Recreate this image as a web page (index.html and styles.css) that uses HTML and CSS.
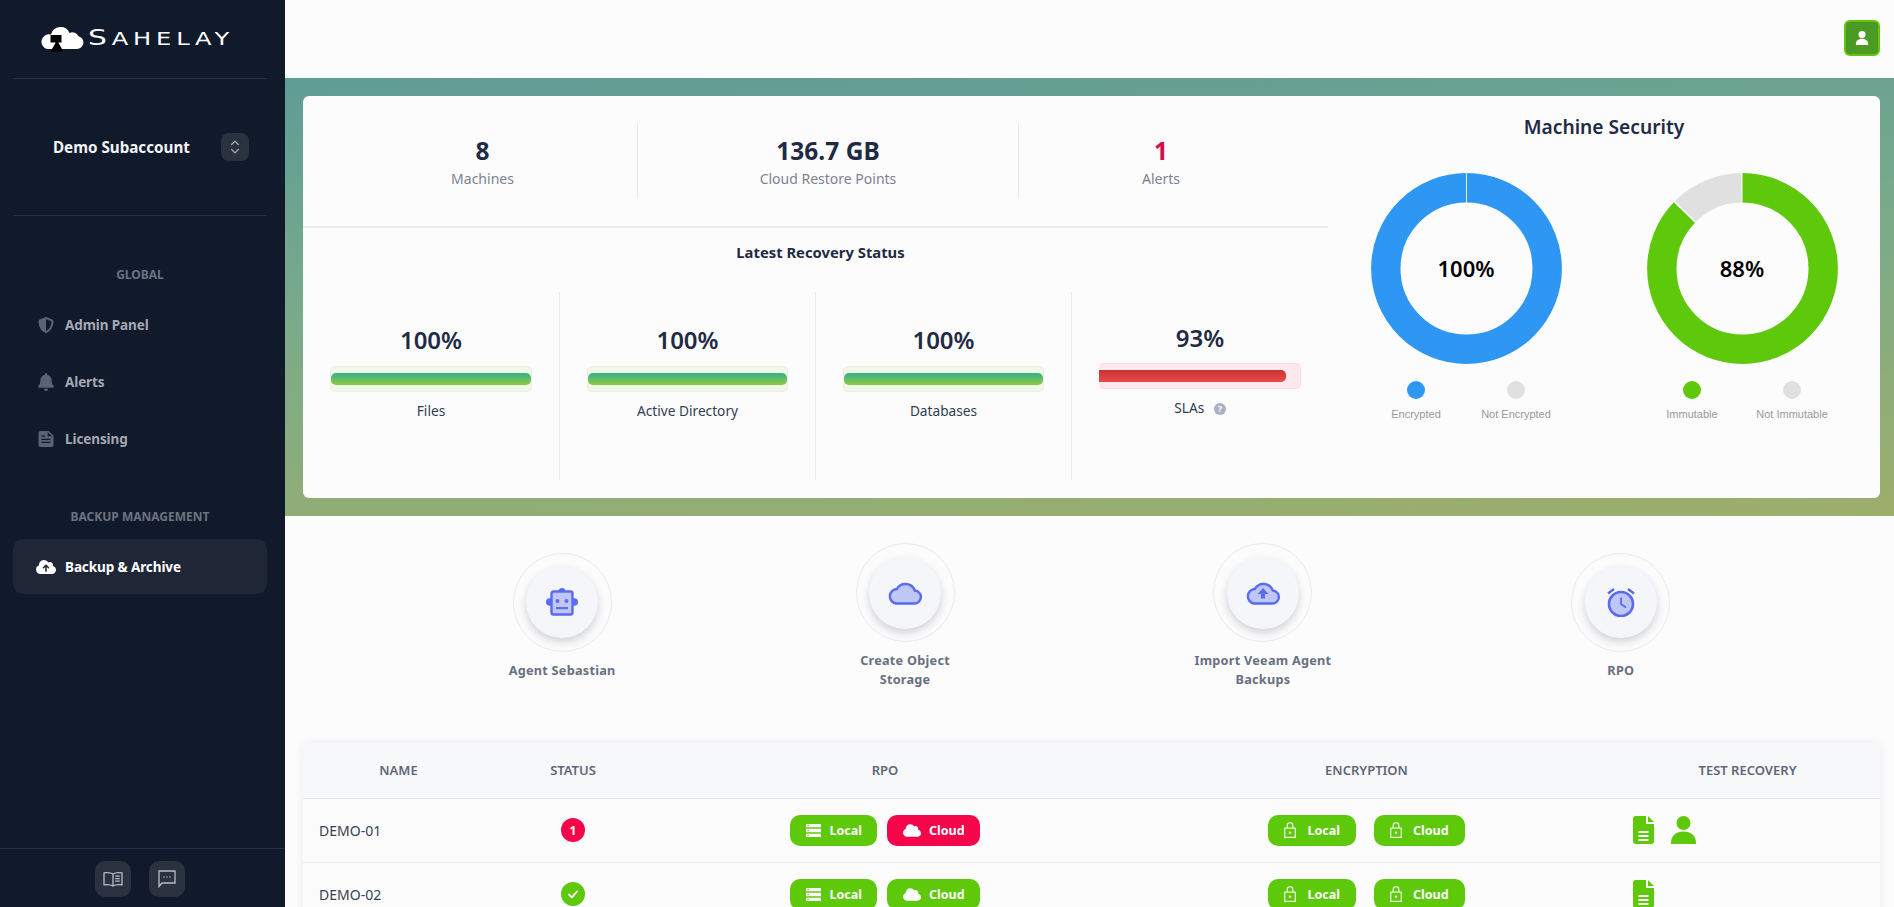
FILE: index.html
```html
<!DOCTYPE html>
<html lang="en">
<head>
    <meta charset="UTF-8">
    <title>Sahelay</title>
    <link rel="stylesheet" href="styles.css">
</head>
<body>

<svg class="icon-defs" aria-hidden="true">
    <symbol id="i-cloud" viewBox="0 0 640 512"><path d="M0 336c0 79.5 64.5 144 144 144H512c70.7 0 128-57.3 128-128c0-61.9-44-113.6-102.4-125.4c4.1-10.7 6.4-22.4 6.4-34.6c0-53-43-96-96-96c-19.7 0-38.1 6-53.3 16.2C367 64.2 315.3 32 256 32C167.6 32 96 103.6 96 192c0 2.7 .1 5.4 .2 8.1C40.2 219.8 0 273.2 0 336z"/></symbol>
    <symbol id="i-server" viewBox="0 0 15 13"><path fill-rule="evenodd" d="M0 0h15v3.300H0zM1.500 1v1.300h1.300V1zM0 4.800h15v3.400H0zM1.500 5.900v1.300h1.300V5.900zM0 9.700h15V13H0zM1.500 10.700V12h1.300v-1.300z"/></symbol>
    <symbol id="i-lock" viewBox="0 0 12 16"><path fill="none" stroke="currentColor" stroke-width="1.300" d="M.7 6.200h10.600v9.100H.7zM3.200 6V3.500a2.800 2.800 0 0 1 5.600 0V6"/><rect x="4.900" y="9.600" width="2.200" height="2.200"/></symbol>
    <symbol id="i-file" viewBox="0 0 21 28"><path fill-rule="evenodd" d="M3 0h10v8h8v17a3 3 0 0 1-3 3H3a3 3 0 0 1-3-3V3a3 3 0 0 1 3-3zM15 0l6 6h-6zM5.500 15v2h10v-2zM5.500 19v2h10v-2zM5.500 23v2h10v-2z"/></symbol>
    <symbol id="i-person" viewBox="0 0 25 28"><circle cx="12.500" cy="7" r="7"/><path d="M0 28v-1.500C0 20 5 15.500 12.500 15.500S25 20 25 26.500V28z"/></symbol>
</svg>

<div class="app">
    <aside class="sidebar">
        <div class="logo-row">
            <div class="logo">
                <svg class="logo-mark" viewBox="0 0 44 27">
                    <path fill="#fff" d="M7 24h30a6.500 6.500 0 0 0 1.500-12.800A6.500 6.500 0 0 0 29.500 8 9.800 9.800 0 0 0 11 9.500 7.300 7.300 0 0 0 7 24z"/>
                    <path d="M10.500 10h11v7.500h-3.200l3.700 6.500 1 2.500h-12l1-2.500 3.700-6.500h-5.200z" fill="#000"/>
                </svg>
                <span class="logo-text"><span class="logo-cap">S</span>AHELAY</span>
            </div>
        </div>

        <div class="account">
            <span class="account-name">Demo Subaccount</span>
            <button class="account-switch">
                <svg viewBox="0 0 12 18" width="10" height="16" fill="none" stroke="#a7acb6" stroke-width="1.500" stroke-linecap="round" stroke-linejoin="round"><path d="M2 6l4-4 4 4M2 12l4 4 4-4"/></svg>
            </button>
        </div>

        <nav class="nav">
            <div class="nav-label">GLOBAL</div>
            <a class="nav-item">
                <svg class="nav-icon" viewBox="0 0 512 512"><path d="M256 0c4.600 0 9.200 1 13.400 2.900L457.700 82.800c22 9.300 38.400 31 38.300 57.200c-.5 99.200-41.300 280.700-213.600 363.200c-16.700 8-36.100 8-52.800 0C57.300 420.700 16.500 239.200 16 140c-.1-26.200 16.300-47.900 38.300-57.200L242.700 2.900C246.800 1 251.400 0 256 0zm0 66.800V444.800C394 378 431.100 230.100 432 141.400L256 66.800z"/></svg>
                <span>Admin Panel</span>
            </a>
            <a class="nav-item">
                <svg class="nav-icon" viewBox="0 0 448 512"><path d="M224 0c-17.700 0-32 14.300-32 32V51.200C119 66 64 130.600 64 208v18.800c0 47-17.300 92.400-48.500 127.600l-7.400 8.300c-8.400 9.400-10.400 22.900-5.300 34.400S19.400 416 32 416H416c12.600 0 24-7.400 29.200-18.900s3.100-25-5.300-34.400l-7.400-8.300C401.300 319.200 384 273.900 384 226.800V208c0-77.400-55-142-128-156.800V32c0-17.700-14.300-32-32-32zm45.300 493.300c12-12 18.700-28.300 18.700-45.300H224 160c0 17 6.700 33.300 18.700 45.300s28.300 18.700 45.300 18.700s33.300-6.700 45.300-18.700z"/></svg>
                <span>Alerts</span>
            </a>
            <a class="nav-item">
                <svg class="nav-icon" viewBox="0 0 16 16"><path fill-rule="evenodd" d="M2.500 0H10.500L15.500 4.500V14a2 2 0 0 1-2 2H2.500a2 2 0 0 1-2-2V2a2 2 0 0 1 2-2zM9.700 1.200V5.300H14.200L13.800 5zM3.500 7.800h9v1.300h-9zM3.500 10.800h9v1.300h-9zM3.500 4.500h3.500v1.300H3.500z"/></svg>
                <span>Licensing</span>
            </a>

            <div class="nav-label nav-label-second">BACKUP MANAGEMENT</div>
            <a class="nav-item nav-item-active">
                <svg class="nav-icon nav-icon-wide" viewBox="0 0 640 512"><path d="M144 480C64.500 480 0 415.500 0 336c0-62.800 40.200-116.200 96.200-135.900c-.1-2.700-.2-5.400-.2-8.100c0-88.400 71.600-160 160-160c59.300 0 111 32.200 138.700 80.200C409.900 102 428.300 96 448 96c53 0 96 43 96 96c0 12.200-2.300 23.800-6.400 34.600C596 238.400 640 290.100 640 352c0 70.700-57.300 128-128 128H144zm79-217c-9.400 9.400-9.400 24.600 0 33.900s24.600 9.400 33.900 0l39-39V392c0 13.300 10.700 24 24 24s24-10.700 24-24V257.900l39 39c9.400 9.400 24.600 9.400 33.900 0s9.400-24.600 0-33.900l-80-80c-9.400-9.400-24.600-9.400-33.900 0l-80 80z"/></svg>
                <span>Backup &amp; Archive</span>
            </a>
        </nav>

        <div class="sidebar-foot">
            <button class="foot-btn">
                <svg viewBox="0 0 20 16" width="20" height="16" fill="none" stroke="#b9bdc7" stroke-width="1.300"><path d="M10 3C8 1.600 4.500 1.300 1 1.800v12c3.500-.5 7-.2 9 1.200 2-1.400 5.500-1.700 9-1.200v-12C15.500 1.300 12 1.600 10 3zM10 3v12M12.200 5.200h4.600M12.200 7.700h4.600M12.200 10.200h4.600"/></svg>
            </button>
            <button class="foot-btn">
                <svg viewBox="0 0 18 18" width="18" height="18" fill="none" stroke="#b9bdc7" stroke-width="1.300"><path d="M1 1h16v12H4l-3 3.500z"/><path d="M5.500 7h1M8.500 7h1M11.500 7h1" stroke-width="1.500"/></svg>
            </button>
        </div>
    </aside>

    <main class="main">
        <header class="topbar">
            <button class="user-btn">
                <svg viewBox="0 0 25 28" width="14" height="14" fill="#fff"><use href="#i-person"/></svg>
            </button>
        </header>

        <section class="hero">
            <div class="hero-card">
                <div class="hero-left">
                    <div class="stats">
                        <div class="stat stat-first">
                            <div class="stat-value">8</div>
                            <div class="stat-label">Machines</div>
                        </div>
                        <div class="stat stat-mid">
                            <div class="stat-value">136.7 GB</div>
                            <div class="stat-label">Cloud Restore Points</div>
                        </div>
                        <div class="stat stat-last">
                            <div class="stat-value stat-alert">1</div>
                            <div class="stat-label">Alerts</div>
                        </div>
                    </div>

                    <h3 class="recovery-title">Latest Recovery Status</h3>
                    <div class="gauges">
                        <div class="gauge">
                            <div class="gauge-pct">100%</div>
                            <div class="bar"><div class="bar-fill" style="width: 100%"></div></div>
                            <div class="gauge-label">Files</div>
                        </div>
                        <div class="gauge">
                            <div class="gauge-pct">100%</div>
                            <div class="bar"><div class="bar-fill" style="width: 100%"></div></div>
                            <div class="gauge-label">Active Directory</div>
                        </div>
                        <div class="gauge">
                            <div class="gauge-pct">100%</div>
                            <div class="bar"><div class="bar-fill" style="width: 100%"></div></div>
                            <div class="gauge-label">Databases</div>
                        </div>
                        <div class="gauge gauge-bad">
                            <div class="gauge-pct">93%</div>
                            <div class="bar bar-bad"><div class="bar-fill" style="width: 93%"></div></div>
                            <div class="gauge-label">SLAs <span class="help">?</span></div>
                        </div>
                    </div>
                </div>

                <div class="hero-right">
                    <h2 class="security-title">Machine Security</h2>
                    <div class="donuts">
                        <div class="donut-block">
                            <div class="donut">
                                <svg viewBox="0 0 191 191" width="191" height="191">
                                    <circle class="ring ring-blue" cx="95.500" cy="95.500" r="80.700" pathLength="100" stroke-dasharray="100 0"/>
                                    <path d="M95.500 0v30" stroke="#e4eef8" stroke-width="1"/>
                                </svg>
                                <div class="donut-text">100%</div>
                            </div>
                            <div class="legend">
                                <div class="legend-item"><span class="dot dot-blue"></span>Encrypted</div>
                                <div class="legend-item"><span class="dot dot-grey"></span>Not Encrypted</div>
                            </div>
                        </div>
                        <div class="donut-block">
                            <div class="donut">
                                <svg viewBox="0 0 191 191" width="191" height="191">
                                    <circle class="ring ring-green" cx="95.500" cy="95.500" r="80.700" pathLength="100" stroke-dasharray="87.200 12.800"/>
                                    <circle class="ring ring-grey" cx="95.500" cy="95.500" r="80.700" pathLength="100" stroke-dasharray="12.300 87.700" stroke-dashoffset="12.500"/>
                                </svg>
                                <div class="donut-text">88%</div>
                            </div>
                            <div class="legend">
                                <div class="legend-item"><span class="dot dot-green"></span>Immutable</div>
                                <div class="legend-item"><span class="dot dot-grey"></span>Not Immutable</div>
                            </div>
                        </div>
                    </div>
                </div>
            </div>
        </section>

        <section class="actions">
            <div class="action">
                <div class="action-ring"><div class="action-btn">
                    <svg viewBox="0 0 32 28" width="32" height="28">
                        <circle cx="16" cy="3.500" r="3.500" fill="#5a6bef"/>
                        <circle cx="3.800" cy="14" r="3.800" fill="#5a6bef"/>
                        <circle cx="28.200" cy="14" r="3.800" fill="#5a6bef"/>
                        <rect x="5.500" y="3.500" width="21" height="23" rx="2" fill="#bfc6f8" stroke="#5a6bef" stroke-width="2.400"/>
                        <circle cx="11.500" cy="13" r="2" fill="#5a6bef"/>
                        <circle cx="20.500" cy="13" r="2" fill="#5a6bef"/>
                        <rect x="10" y="19" width="12" height="2.200" fill="#5a6bef"/>
                    </svg>
                </div></div>
                <div class="action-label">Agent Sebastian</div>
            </div>
            <div class="action">
                <div class="action-ring"><div class="action-btn">
                    <svg viewBox="0 0 36 24" width="36" height="24">
                        <path d="M9 22.500H27a6.500 6.500 0 0 0 .8-13A10 10 0 0 0 9.800 8 7.300 7.300 0 0 0 9 22.500z" fill="#bfc6f8" stroke="#5a6bef" stroke-width="2.400"/>
                    </svg>
                </div></div>
                <div class="action-label">Create Object<br>Storage</div>
            </div>
            <div class="action">
                <div class="action-ring"><div class="action-btn">
                    <svg viewBox="0 0 36 24" width="36" height="24">
                        <path d="M9 22.500H27a6.500 6.500 0 0 0 .8-13A10 10 0 0 0 9.800 8 7.300 7.300 0 0 0 9 22.500z" fill="#bfc6f8" stroke="#5a6bef" stroke-width="2.400"/>
                        <path d="M18 7l5.500 6h-3.500v4.500h-4V13h-3.500z" fill="#5a6bef"/>
                    </svg>
                </div></div>
                <div class="action-label">Import Veeam Agent<br>Backups</div>
            </div>
            <div class="action">
                <div class="action-ring"><div class="action-btn">
                    <svg viewBox="0 0 30 29" width="30" height="29">
                        <circle cx="15" cy="16" r="12" fill="#bfc6f8" stroke="#5a6bef" stroke-width="2.600"/>
                        <path d="M15 9.500V16l5 3.500" fill="none" stroke="#5a6bef" stroke-width="1.800"/>
                        <path d="M2 5.500L8 1M28 5.500L22 1" fill="none" stroke="#5a6bef" stroke-width="2.400"/>
                    </svg>
                </div></div>
                <div class="action-label">RPO</div>
            </div>
        </section>

        <section class="table-wrap">
            <table class="machines">
                <colgroup>
                    <col class="col-name"><col class="col-status"><col class="col-rpo"><col class="col-enc"><col class="col-test">
                </colgroup>
                <thead>
                    <tr><th>NAME</th><th>STATUS</th><th>RPO</th><th>ENCRYPTION</th><th>TEST RECOVERY</th></tr>
                </thead>
                <tbody>
                    <tr>
                        <td class="cell-name">DEMO-01</td>
                        <td class="cell-center"><span class="badge badge-red">1</span></td>
                        <td class="cell-center">
                            <div class="chips">
                                <span class="chip"><svg class="chip-icon"><use href="#i-server"/></svg>Local</span>
                                <span class="chip chip-red"><svg class="chip-icon chip-icon-cloud"><use href="#i-cloud"/></svg>Cloud</span>
                            </div>
                        </td>
                        <td class="cell-center">
                            <div class="chips chips-wide">
                                <span class="chip chip-lock"><svg class="chip-icon-lock"><use href="#i-lock"/></svg>Local</span>
                                <span class="chip chip-lock"><svg class="chip-icon-lock"><use href="#i-lock"/></svg>Cloud</span>
                            </div>
                        </td>
                        <td>
                            <div class="test-icons">
                                <svg class="test-file"><use href="#i-file"/></svg>
                                <svg class="test-person"><use href="#i-person"/></svg>
                            </div>
                        </td>
                    </tr>
                    <tr>
                        <td class="cell-name">DEMO-02</td>
                        <td class="cell-center">
                            <span class="badge badge-green">
                                <svg viewBox="0 0 12 12" width="12" height="12" fill="none" stroke="#fff" stroke-width="1.800" stroke-linecap="round" stroke-linejoin="round"><path d="M2 6.500l2.800 2.800L10 3.500"/></svg>
                            </span>
                        </td>
                        <td class="cell-center">
                            <div class="chips">
                                <span class="chip"><svg class="chip-icon"><use href="#i-server"/></svg>Local</span>
                                <span class="chip"><svg class="chip-icon chip-icon-cloud"><use href="#i-cloud"/></svg>Cloud</span>
                            </div>
                        </td>
                        <td class="cell-center">
                            <div class="chips chips-wide">
                                <span class="chip chip-lock"><svg class="chip-icon-lock"><use href="#i-lock"/></svg>Local</span>
                                <span class="chip chip-lock"><svg class="chip-icon-lock"><use href="#i-lock"/></svg>Cloud</span>
                            </div>
                        </td>
                        <td>
                            <div class="test-icons">
                                <svg class="test-file"><use href="#i-file"/></svg>
                            </div>
                        </td>
                    </tr>
                </tbody>
            </table>
        </section>
    </main>
</div>

</body>
</html>
```

FILE: styles.css
```css
* {
    box-sizing: border-box;
}
html, body {
    height: 100%;
    margin: 0;
    overflow: hidden;
}
body {
    font-family: "Noto Sans", "Open Sans", sans-serif;
    background: #fcfcfd;
    color: #1f2a44;
}
button {
    border: none;
    padding: 0;
    cursor: pointer;
}
.icon-defs {
    display: none;
}
.app {
    display: flex;
    height: 100vh;
}

/* sidebar */
.sidebar {
    width: 285px;
    flex-shrink: 0;
    background: #111a2b;
    display: flex;
    flex-direction: column;
}
.logo-row {
    height: 79px;
    margin: 0 18px 0 13px;
    border-bottom: 1px solid #283143;
    display: flex;
    padding: 25px 0 0 27px;
}
.logo {
    display: flex;
    align-items: flex-start;
    gap: 4px;
}
.logo-mark {
    width: 44px;
    height: 27px;
}
.logo-text {
    font-family: "DejaVu Sans", sans-serif;
    font-size: 17px;
    line-height: 26px;
    letter-spacing: 3.4px;
    color: #fff;
    transform: scaleX(1.42);
    transform-origin: left center;
}
.logo-cap {
    font-size: 21px;
}
.account {
    height: 137px;
    margin: 0 18px 0 13px;
    border-bottom: 1px solid #283143;
    display: flex;
    align-items: center;
    padding-left: 40px;
    gap: 31px;
}
.account-name {
    font-size: 15.2px;
    font-weight: 700;
    color: #f4f5f7;
}
.account-switch {
    width: 28px;
    height: 28px;
    border-radius: 8px;
    background: #2a3240;
    display: flex;
    align-items: center;
    justify-content: center;
}
.nav {
    padding: 50px 18px 0 13px;
    display: flex;
    flex-direction: column;
    gap: 2px;
}
.nav-label {
    font-size: 12px;
    font-weight: 700;
    line-height: 18px;
    color: #6b7280;
    text-align: center;
    margin-bottom: 11px;
}
.nav-label-second {
    margin-top: 40px;
}
.nav-item {
    height: 55px;
    display: flex;
    align-items: center;
    gap: 11px;
    padding-left: 25px;
    border-radius: 10px;
    font-size: 13.5px;
    letter-spacing: -0.1px;
    font-weight: 700;
    color: #a4a8b2;
}
.nav-icon {
    width: 16px;
    height: 18px;
    fill: #5b6271;
    flex-shrink: 0;
}
.nav-item-active {
    background: #1f2737;
    color: #fff;
    padding-left: 23px;
    gap: 9px;
}
.nav-icon-wide {
    width: 20px;
    fill: #fff;
}
.sidebar-foot {
    margin-top: auto;
    height: 59px;
    border-top: 1px solid #283143;
    padding: 12px 5px 0 0;
    display: flex;
    justify-content: center;
    gap: 18px;
}
.foot-btn {
    width: 36px;
    height: 36px;
    border-radius: 10px;
    background: #2a3240;
    display: flex;
    align-items: center;
    justify-content: center;
}

/* main */
.main {
    flex: 1;
    min-width: 0;
    display: flex;
    flex-direction: column;
    overflow: hidden;
}
.topbar {
    height: 78px;
    flex-shrink: 0;
    display: flex;
    justify-content: flex-end;
    padding: 20px 14px 0 0;
}
.user-btn {
    width: 36px;
    height: 36px;
    border-radius: 6px;
    background: #4b9a24;
    border: 2px solid #5fc70d;
    display: flex;
    align-items: center;
    justify-content: center;
}
.hero {
    flex-shrink: 0;
    padding: 18px 14px 18px 18px;
    background: linear-gradient(176deg, #5f9c96 0%, #7aab8a 45%, #9dae6b 100%);
}
.hero-card {
    height: 402px;
    background: #fcfcfd;
    border-radius: 6px;
    display: flex;
}
.hero-left {
    width: 1025px;
    flex-shrink: 0;
    display: flex;
    flex-direction: column;
}
.stats {
    height: 132px;
    padding: 27px 25px;
    border-bottom: 2px solid #ebecef;
    display: flex;
}
.stat {
    padding-top: 2px;
    text-align: center;
    display: flex;
    flex-direction: column;
    justify-content: center;
}
.stat-first {
    width: 310px;
    border-right: 1px solid #e8e9ec;
}
.stat-mid {
    width: 381px;
    border-right: 1px solid #e8e9ec;
}
.stat-last {
    flex: 1;
}
.stat-value {
    font-size: 24.5px;
    line-height: 34px;
    font-weight: 700;
    color: #1f2a44;
}
.stat-alert {
    color: #d90b45;
}
.stat-label {
    font-size: 14px;
    line-height: 22px;
    color: #7d838f;
}
.recovery-title {
    margin: 0;
    height: 64px;
    padding: 13px 0 0 10px;
    text-align: center;
    font-size: 14.8px;
    line-height: 22px;
    font-weight: 700;
    color: #1f2a44;
}
.gauges {
    height: 188px;
    display: grid;
    grid-template-columns: 257px 256px 256px 1fr;
}
.gauge {
    padding: 33px 27px 0;
    border-right: 1px solid #e8e9ec;
    text-align: center;
}
.gauge:last-child {
    border-right: none;
}
.gauge-bad {
    padding-top: 31px;
}
.gauge-pct {
    font-size: 24px;
    line-height: 30px;
    font-weight: 600;
    color: #1f2a44;
    margin-bottom: 11px;
}
.gauge-bad .gauge-pct {
    margin-bottom: 10px;
}
.bar {
    height: 26px;
    padding: 6px 0;
    border: 1px solid #e9f1dd;
    border-radius: 5px;
    background: #f1f8e9;
    overflow: hidden;
}
.bar-fill {
    height: 12px;
    border-radius: 5px;
    background: linear-gradient(to bottom, #34b18f, #8fc73e);
}
.bar-bad {
    background: #fde8ec;
    border-color: #fbdce2;
    border-left: none;
}
.bar-bad .bar-fill {
    background: linear-gradient(to bottom, #c93333, #ea4949);
    border-radius: 0 5px 5px 0;
}
.gauge-label {
    margin-top: 9px;
    font-size: 13.7px;
    line-height: 20px;
    color: #333c52;
}
.help {
    display: inline-block;
    width: 12px;
    height: 12px;
    margin-left: 6px;
    border-radius: 50%;
    background: #a9b3c0;
    color: #fff;
    font-size: 9px;
    font-weight: 700;
    line-height: 12px;
    vertical-align: 1px;
}
.hero-right {
    flex: 1;
    min-width: 0;
}
.security-title {
    margin: 0;
    padding-top: 17px;
    height: 77px;
    text-align: center;
    font-size: 19.2px;
    line-height: 28px;
    font-weight: 600;
    color: #1f2a44;
}
.donuts {
    display: grid;
    grid-template-columns: 1fr 1fr;
}
.donut-block {
    display: flex;
    flex-direction: column;
    align-items: center;
}
.donut {
    display: grid;
    width: 191px;
    height: 191px;
}
.donut svg, .donut-text {
    grid-area: 1 / 1;
}
.donut-text {
    display: flex;
    align-items: center;
    justify-content: center;
    padding-bottom: 2px;
    font-size: 22px;
    font-weight: 600;
    color: #000;
}
.ring {
    fill: none;
    stroke-width: 29.4;
    transform: rotate(-90deg);
    transform-origin: 95.5px 95.5px;
}
.ring-blue {
    stroke: #2e97f3;
}
.ring-green {
    stroke: #5ec80a;
}
.ring-grey {
    stroke: #e0e0e0;
}
.legend {
    display: flex;
    margin-top: 17px;
}
.legend-item {
    width: 100px;
    display: flex;
    flex-direction: column;
    align-items: center;
    gap: 8px;
    font-family: "Liberation Sans", Arial, sans-serif;
    font-size: 11px;
    line-height: 14px;
    color: #999;
    white-space: nowrap;
}
.dot {
    width: 18px;
    height: 18px;
    border-radius: 50%;
}
.dot-blue {
    background: #2e97f3;
}
.dot-green {
    background: #5ec80a;
}
.dot-grey {
    background: #e0e0e0;
}

/* quick actions */
.actions {
    flex-shrink: 0;
    display: flex;
    justify-content: center;
    align-items: center;
    gap: 240px;
    padding: 27px 0 54px;
}
.action {
    display: flex;
    flex-direction: column;
    align-items: center;
}
.action-ring {
    width: 99px;
    height: 99px;
    border-radius: 50%;
    border: 1px solid #e9eaee;
    display: flex;
    align-items: center;
    justify-content: center;
}
.action-btn {
    width: 72px;
    height: 72px;
    border-radius: 50%;
    background: #f5f6fa;
    box-shadow: 0 4px 8px rgba(40, 44, 60, 0.2);
    display: flex;
    align-items: center;
    justify-content: center;
}
.action-label {
    margin-top: 9px;
    font-size: 12.7px;
    line-height: 19px;
    font-weight: 700;
    letter-spacing: 0.25px;
    text-align: center;
    color: #697080;
    white-space: nowrap;
}

/* machine table */
.table-wrap {
    flex-shrink: 0;
    margin: 0 14px 0 18px;
    border-radius: 6px 6px 0 0;
    box-shadow: 0 0 10px rgba(30, 40, 60, 0.08);
}
.machines {
    width: 100%;
    table-layout: fixed;
    border-collapse: collapse;
}
.col-name { width: 191px; }
.col-status { width: 158px; }
.col-rpo { width: 466px; }
.col-enc { width: 497px; }
.machines th {
    height: 55px;
    background: #f7f8fa;
    border-bottom: 1px solid #e3e5e9;
    font-size: 13px;
    font-weight: 600;
    color: #5f6678;
}
.machines td {
    height: 64px;
    border-bottom: 1px solid #e8e9ec;
    padding: 0 16px;
    font-size: 14px;
    color: #374151;
}
.cell-center {
    text-align: center;
}
.badge {
    width: 24px;
    height: 24px;
    border-radius: 50%;
    display: inline-flex;
    align-items: center;
    justify-content: center;
    color: #fff;
    font-size: 12px;
    font-weight: 700;
    vertical-align: middle;
}
.badge-red {
    background: #f5054a;
}
.badge-green {
    background: #5ec80a;
}
.chips {
    display: flex;
    justify-content: center;
    gap: 10px;
}
.chips-wide {
    gap: 18px;
}
.chip {
    height: 31px;
    padding: 0 15px 0 16px;
    border-radius: 10px;
    background: #5ec80a;
    color: #fff;
    font-size: 12.5px;
    font-weight: 700;
    display: inline-flex;
    align-items: center;
    gap: 8px;
}
.chip-red {
    background: #f5054a;
}
.chip-icon {
    width: 15px;
    height: 13px;
    fill: #fff;
}
.chip-icon-cloud {
    width: 18px;
    height: 15px;
}
.chip-lock {
    padding: 0 16px;
    gap: 11px;
}
.chip-icon-lock {
    width: 12px;
    height: 16px;
    fill: #e4f6d6;
    color: #e4f6d6;
}
.test-icons {
    display: flex;
    gap: 17px;
    margin-left: 2px;
}
.test-file {
    width: 21px;
    height: 28px;
    fill: #5ec80a;
}
.test-person {
    width: 25px;
    height: 28px;
    fill: #5ec80a;
}
```
